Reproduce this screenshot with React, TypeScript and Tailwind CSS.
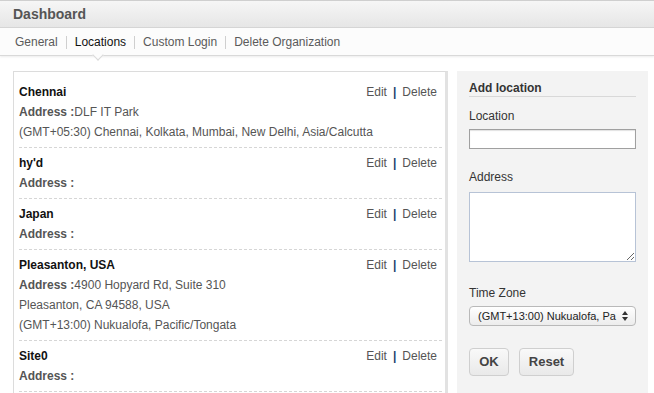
import React from 'react'

interface Site {
  name: string
  address: string
  lines: string[]
}

const SITES: Site[] = [
  { name: 'Chennai', address: 'DLF IT Park', lines: ['(GMT+05:30) Chennai, Kolkata, Mumbai, New Delhi, Asia/Calcutta'] },
  { name: "hy'd", address: '', lines: [] },
  { name: 'Japan', address: '', lines: [] },
  {
    name: 'Pleasanton, USA',
    address: '4900 Hopyard Rd, Suite 310',
    lines: ['Pleasanton, CA 94588, USA', '(GMT+13:00) Nukualofa, Pacific/Tongata'],
  },
  { name: 'Site0', address: '', lines: [] },
]

const TABS = ['General', 'Locations', 'Custom Login', 'Delete Organization']

function SiteRow({ site }: { site: Site }) {
  return (
    <div className="py-[5px] border-b border-dashed border-[#d6d6d6] text-[12px] leading-[20px] text-[#555]">
      <div className="flex items-center justify-between">
        <span className="font-bold text-[#111]">{site.name}</span>
        <span className="flex items-center pr-[5px]">
          <a className="text-[#555]">Edit</a>
          <span className="mx-[6px] font-bold text-[#1d3f6e]">|</span>
          <a className="text-[#555]">Delete</a>
        </span>
      </div>
      <div>
        <span className="font-bold">Address :</span>
        {site.address}
      </div>
      {site.lines.map(l => (
        <div key={l}>{l}</div>
      ))}
    </div>
  )
}

export default function App() {
  return (
    <div className="h-[393px] w-[654px] overflow-hidden bg-white font-['Liberation_Sans',Arial,sans-serif]">
      {/* header */}
      <div className="h-[28px] border-t border-[#cfcfcf] border-b border-b-[#d6d6d6] bg-gradient-to-b from-[#f6f6f6] to-[#e6e6e6] px-[13px] flex items-center">
        <span className="text-[14px] font-bold text-[#555]">Dashboard</span>
      </div>

      {/* tabs */}
      <div className="relative h-[28px] bg-[#fcfcfc] border-b border-[#d9d9d9] shadow-[0_1px_2px_rgba(0,0,0,0.08)] flex items-center pl-[15px] pt-[1px] text-[12px] text-[#5a5a5a]">
        {TABS.map((t, i) => (
          <React.Fragment key={t}>
            {i > 0 && <span className="mx-[8px] h-[13px] w-px bg-[#cfcfcf]" />}
            <span className={i === 1 ? 'text-[#111]' : ''}>{t}</span>
          </React.Fragment>
        ))}
        <span className="absolute left-[94px] top-[23px] h-[8px] w-[8px] rotate-45 bg-[#fcfcfc] border-r border-b border-[#d9d9d9]" />
      </div>

      {/* body */}
      <div className="flex items-start pt-[15px] pl-[13px]">
        <div className="w-[435px] h-[340px] bg-white border border-[#dcdcdc] border-r-[3px] border-r-[#e2e2e2] pt-[5px] pl-[5px] pr-[3px]">
          {SITES.map(s => (
            <SiteRow key={s.name} site={s} />
          ))}
        </div>

        <div className="ml-[9px] w-[191px] h-[340px] bg-[#f3f3f3] px-[12px] pt-[9px] text-[12px] text-[#333]">
          <div className="leading-[16px] font-bold border-b border-[#d8d8d8]">Add location</div>

          <div className="mt-[11px] leading-[16px]">Location</div>
          <input className="mt-[5px] block h-[20px] w-[167px] bg-white border border-[#a0a0a0] shadow-[inset_0_1px_1px_rgba(0,0,0,0.12)] outline-none" />

          <div className="mt-[20px] leading-[16px]">Address</div>
          <textarea className="mt-[7px] block h-[70px] w-[167px] bg-white border border-[#b7c3d6] outline-none resize" />

          <div className="mt-[23px] leading-[16px]">Time Zone</div>
          <div className="mt-[5px] h-[20px] w-[167px] rounded-[4px] border border-[#b9b9b9] bg-gradient-to-b from-[#ffffff] to-[#ececec] flex items-center justify-between pl-[8px] pr-[7px] text-[11px] text-[#222]">
            <span className="whitespace-nowrap">(GMT+13:00) Nukualofa, Pa</span>
            <svg width="6" height="10" viewBox="0 0 6 10" className="shrink-0 ml-[4px]">
              <path d="M3 0 L6 4 L0 4 Z" fill="#333" />
              <path d="M3 10 L6 6 L0 6 Z" fill="#333" />
            </svg>
          </div>

          <div className="mt-[22px] flex gap-[10px]">
            <button className="h-[28px] w-[40px] rounded-[4px] border border-[#cfcfcf] bg-gradient-to-b from-[#f9f9f9] to-[#e9e9e9] font-bold text-[#444] text-[13px]">
              OK
            </button>
            <button className="h-[28px] w-[55px] rounded-[4px] border border-[#cfcfcf] bg-gradient-to-b from-[#f9f9f9] to-[#e9e9e9] font-bold text-[#444] text-[13px]">
              Reset
            </button>
          </div>
        </div>
      </div>
    </div>
  )
}
